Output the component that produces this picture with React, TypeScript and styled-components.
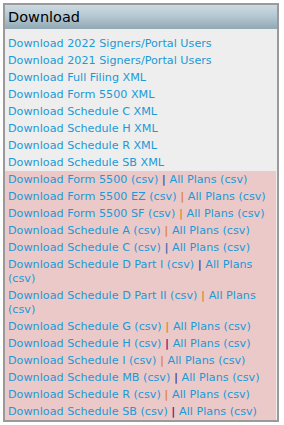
import React from "react";
import styled, { createGlobalStyle } from "styled-components";

const Global = createGlobalStyle`
  html, body { margin: 0; padding: 0; background: #ffffff; }
  body { font-family: "DejaVu Sans", Verdana, sans-serif; }
`;

const Page = styled.div`
  padding: 3px 5px 0 3px;
`;

const Panel = styled.div`
  width: 272px;
  border: 2px solid #9a9a9a;
  background: #eeeeee;
`;

const Header = styled.div`
  height: 24px;
  background: linear-gradient(to bottom, #cddbe3 0%, #b3c6d0 50%, #90a8b3 100%);
  display: flex;
  align-items: center;
  padding-left: 3px;
`;

const Title = styled.h2`
  margin: 0;
  font-family: "DejaVu Sans", Verdana, sans-serif;
  font-weight: normal;
  font-size: 14.5px;
  color: #000;
`;

const Body = styled.div`
  padding-top: 6px;
`;

const Section = styled.div<{ $pink?: boolean }>`
  background: ${(p) => (p.$pink ? "#ecc9c9" : "transparent")};
  margin-right: ${(p) => (p.$pink ? "1px" : "0")};
`;

const Item = styled.div`
  padding: 1.5px 3px;
  font-size: 11.2px;
  line-height: 14px;
`;

const Link = styled.a`
  color: #1a9ad6;
  text-decoration: none;
  cursor: pointer;
`;

const Sep = styled.span<{ $c: string }>`
  color: ${(p) => p.$c};
  font-weight: bold;
`;

const xmlLinks = [
  "Download 2022 Signers/Portal Users",
  "Download 2021 Signers/Portal Users",
  "Download Full Filing XML",
  "Download Form 5500 XML",
  "Download Schedule C XML",
  "Download Schedule H XML",
  "Download Schedule R XML",
  "Download Schedule SB XML",
];

const ORANGE = "#d9893a";
const PURPLE = "#5a3f8f";
const BLUE = "#3a6fb0";
const MAGENTA = "#7a1a7a";

const csvLinks: { label: string; c: string }[] = [
  { label: "Download Form 5500 (csv)", c: "#4b55a8" },
  { label: "Download Form 5500 EZ (csv)", c: ORANGE },
  { label: "Download Form 5500 SF (csv)", c: ORANGE },
  { label: "Download Schedule A (csv)", c: ORANGE },
  { label: "Download Schedule C (csv)", c: BLUE },
  { label: "Download Schedule D Part I (csv)", c: PURPLE },
  { label: "Download Schedule D Part II (csv)", c: ORANGE },
  { label: "Download Schedule G (csv)", c: ORANGE },
  { label: "Download Schedule H (csv)", c: MAGENTA },
  { label: "Download Schedule I (csv)", c: ORANGE },
  { label: "Download Schedule MB (csv)", c: PURPLE },
  { label: "Download Schedule R (csv)", c: ORANGE },
  { label: "Download Schedule SB (csv)", c: MAGENTA },
];

export default function App() {
  return (
    <>
      <Global />
      <Page>
        <Panel>
          <Header>
            <Title>Download</Title>
          </Header>
          <Body>
            <Section>
              {xmlLinks.map((l) => (
                <Item key={l}>
                  <Link>{l}</Link>
                </Item>
              ))}
            </Section>
            <Section $pink>
              {csvLinks.map((l) => (
                <Item key={l.label}>
                  <Link>{l.label}</Link> <Sep $c={l.c}>|</Sep>{" "}
                  <Link>All Plans (csv)</Link>
                </Item>
              ))}
            </Section>
          </Body>
        </Panel>
      </Page>
    </>
  );
}
